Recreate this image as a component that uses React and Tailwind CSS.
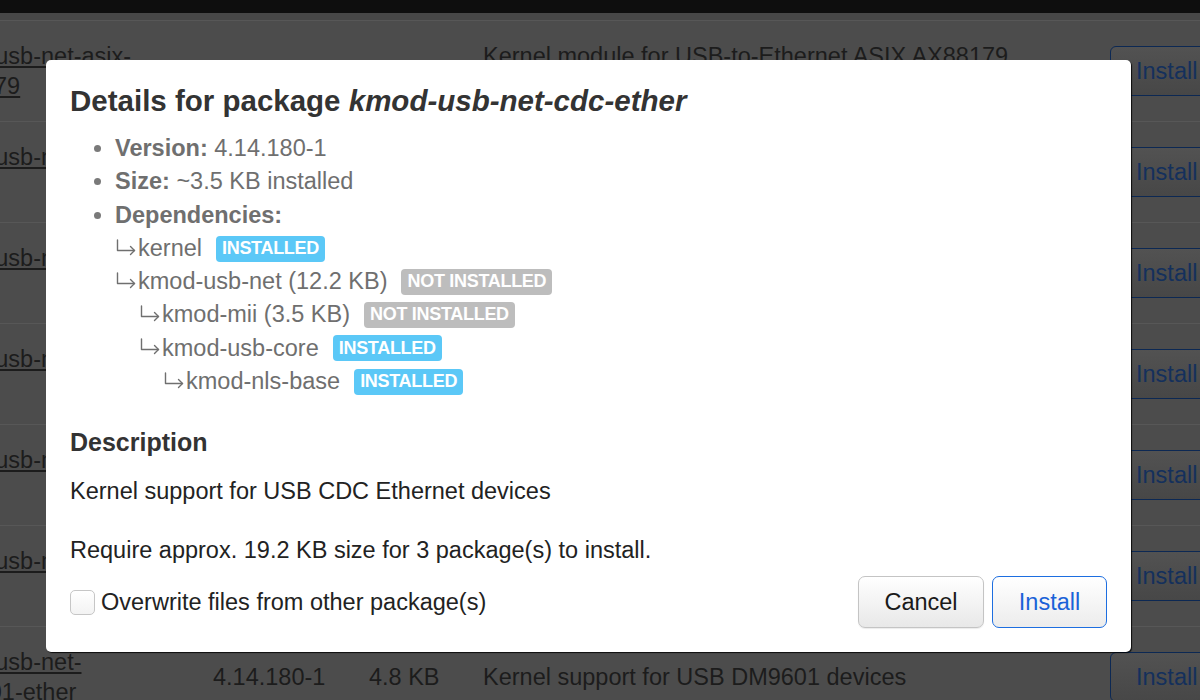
import React from "react";

const FONT = { fontFamily: '"Liberation Sans", Arial, Helvetica, sans-serif' };

const rows = [
  {
    name: "kmod-usb-net-asix-ax88179",
    ver: "4.14.180-1",
    size: "12.1 KB",
    desc: "Kernel module for USB-to-Ethernet ASIX AX88179 based USB 3.0/2.0 to Gigabit Ethernet adapters.",
  },
  {
    name: "kmod-usb-net-cdc-eem",
    ver: "4.14.180-1",
    size: "3.2 KB",
    desc: "Kernel support for USB CDC EEM",
  },
  {
    name: "kmod-usb-net-cdc-ether",
    ver: "4.14.180-1",
    size: "3.5 KB",
    desc: "Kernel support for USB CDC Ethernet devices",
  },
  {
    name: "kmod-usb-net-cdc-mbim",
    ver: "4.14.180-1",
    size: "6.3 KB",
    desc: "Kernel module for Mobile Broadband Interface Model",
  },
  {
    name: "kmod-usb-net-cdc-ncm",
    ver: "4.14.180-1",
    size: "9.9 KB",
    desc: "Kernel support for CDC NCM connections",
  },
  {
    name: "kmod-usb-net-cdc-subset",
    ver: "4.14.180-1",
    size: "3.1 KB",
    desc: "Kernel support for Simple USB Network Links (CDC Ethernet subset)",
  },
  {
    name: "kmod-usb-net-dm9601-ether",
    ver: "4.14.180-1",
    size: "4.8 KB",
    desc: "Kernel support for USB DM9601 devices",
  },
];

function Badge({ installed }) {
  return installed ? (
    <span className="ml-[14px] inline-flex h-[26px] items-center rounded-[4px] bg-[#5bc8f7] px-[6px] text-[18px] font-bold tracking-[-0.3px] text-white">
      INSTALLED
    </span>
  ) : (
    <span className="ml-[14px] inline-flex h-[26px] items-center rounded-[4px] bg-[#bdbdbd] px-[6px] text-[18px] font-bold tracking-[-0.3px] text-white">
      NOT INSTALLED
    </span>
  );
}

function Arrow() {
  return (
    <svg
      width="23"
      height="18"
      viewBox="0 0 23 18"
      className="mb-[4px] flex-none"
      fill="none"
      stroke="#6f6f6f"
      strokeWidth="1.4"
      strokeLinecap="round"
      strokeLinejoin="round"
    >
      <path d="M2.5 2v10.5h17" />
      <path d="M15.5 8.5l4 4-4 4" />
    </svg>
  );
}

export default function App() {
  return (
    <div className="relative h-[700px] w-[1200px] overflow-hidden bg-[#4c4c4c]" style={FONT}>
      {/* dimmed page behind the modal */}
      <div className="h-[13px] bg-[#0e0e0e]" />
      <div className="h-[8px] border-b border-[#575757] bg-[#474747]" />
      <div className="ml-[-70px] text-[23.5px] leading-[30px] text-[#1c1c1c]">
        {rows.map((r) => (
          <div key={r.name} className="flex h-[101px] items-center border-b border-[#575757]">
            <div className="w-[283px] flex-none">
              <div className="w-[226px] underline decoration-[#1c1c1c] underline-offset-[2px]">{r.name}</div>
            </div>
            <div className="w-[156px] flex-none">{r.ver}</div>
            <div className="w-[114px] flex-none">{r.size}</div>
            <div className="w-[627px] flex-none pr-[50px]">{r.desc}</div>
            <div className="flex-none">
              <div className="flex h-[50px] w-[110px] items-center rounded-[6px] border-[1.5px] border-[#0c2853] bg-gradient-to-b from-[#525252] to-[#474747] pl-[25px] text-[#14305c]">
                Install
              </div>
            </div>
          </div>
        ))}
      </div>

      {/* modal */}
      <div className="absolute inset-0">
        <div className="absolute left-[46px] top-[60px] flex h-[592px] w-[1085px] flex-col rounded-[5px] bg-white px-[24px] pb-[24px] pt-[24px] shadow-[1px_1px_1px_rgba(0,0,0,0.85)]">
          <h2 className="text-[29.5px] font-bold leading-[34px] text-[#333]">
            Details for package <em className="italic">kmod-usb-net-cdc-ether</em>
          </h2>
          <ul className="mt-[14px] list-disc pl-[45px] text-[23.5px] leading-[33.3px] text-[#6f6f6f] marker:text-[#7a7a7a]">
            <li>
              <strong className="font-bold">Version:</strong> 4.14.180-1
            </li>
            <li>
              <strong className="font-bold">Size:</strong> ~3.5 KB installed
            </li>
            <li>
              <strong className="font-bold">Dependencies:</strong>
              <div className="flex h-[33.3px] items-center">
                <Arrow />
                <span>kernel</span>
                <Badge installed />
              </div>
              <div className="flex h-[33.3px] items-center">
                <Arrow />
                <span>kmod-usb-net (12.2 KB)</span>
                <Badge installed={false} />
              </div>
              <div className="flex h-[33.3px] items-center pl-[24px]">
                <Arrow />
                <span>kmod-mii (3.5 KB)</span>
                <Badge installed={false} />
              </div>
              <div className="flex h-[33.3px] items-center pl-[24px]">
                <Arrow />
                <span>kmod-usb-core</span>
                <Badge installed />
              </div>
              <div className="flex h-[33.3px] items-center pl-[48px]">
                <Arrow />
                <span>kmod-nls-base</span>
                <Badge installed />
              </div>
            </li>
          </ul>

          <h3 className="mt-[29px] text-[25px] font-bold leading-[30px] text-[#333]">Description</h3>
          <p className="mt-[19px] text-[23.5px] leading-[30px] text-[#222]">
            Kernel support for USB CDC Ethernet devices
          </p>
          <p className="mt-[29px] text-[23.5px] leading-[30px] text-[#222]">
            Require approx. 19.2 KB size for 3 package(s) to install.
          </p>

          <div className="mt-[11px] flex h-[52px] items-center justify-between">
            <label className="flex items-center gap-[6px] text-[23.5px] leading-[30px] text-[#222]">
              <span className="inline-block h-[25px] w-[25px] rounded-[5px] border border-[#c6c6c6] bg-gradient-to-b from-white to-[#f3f3f3]" />
              Overwrite files from other package(s)
            </label>
            <div className="flex gap-[8px]">
              <button className="flex h-[52px] w-[126px] items-center justify-center rounded-[7px] border border-[#c4c4c4] bg-gradient-to-b from-white to-[#e8e8e8] text-[23.5px] text-[#1a1a1a] shadow-[0_1px_1px_rgba(0,0,0,0.08)]">
                Cancel
              </button>
              <button className="flex h-[52px] w-[115px] items-center justify-center rounded-[7px] border-[1.5px] border-[#1d6ee0] bg-gradient-to-b from-white to-[#ececec] text-[23.5px] text-[#1a62d8]">
                Install
              </button>
            </div>
          </div>
        </div>
      </div>
    </div>
  );
}
